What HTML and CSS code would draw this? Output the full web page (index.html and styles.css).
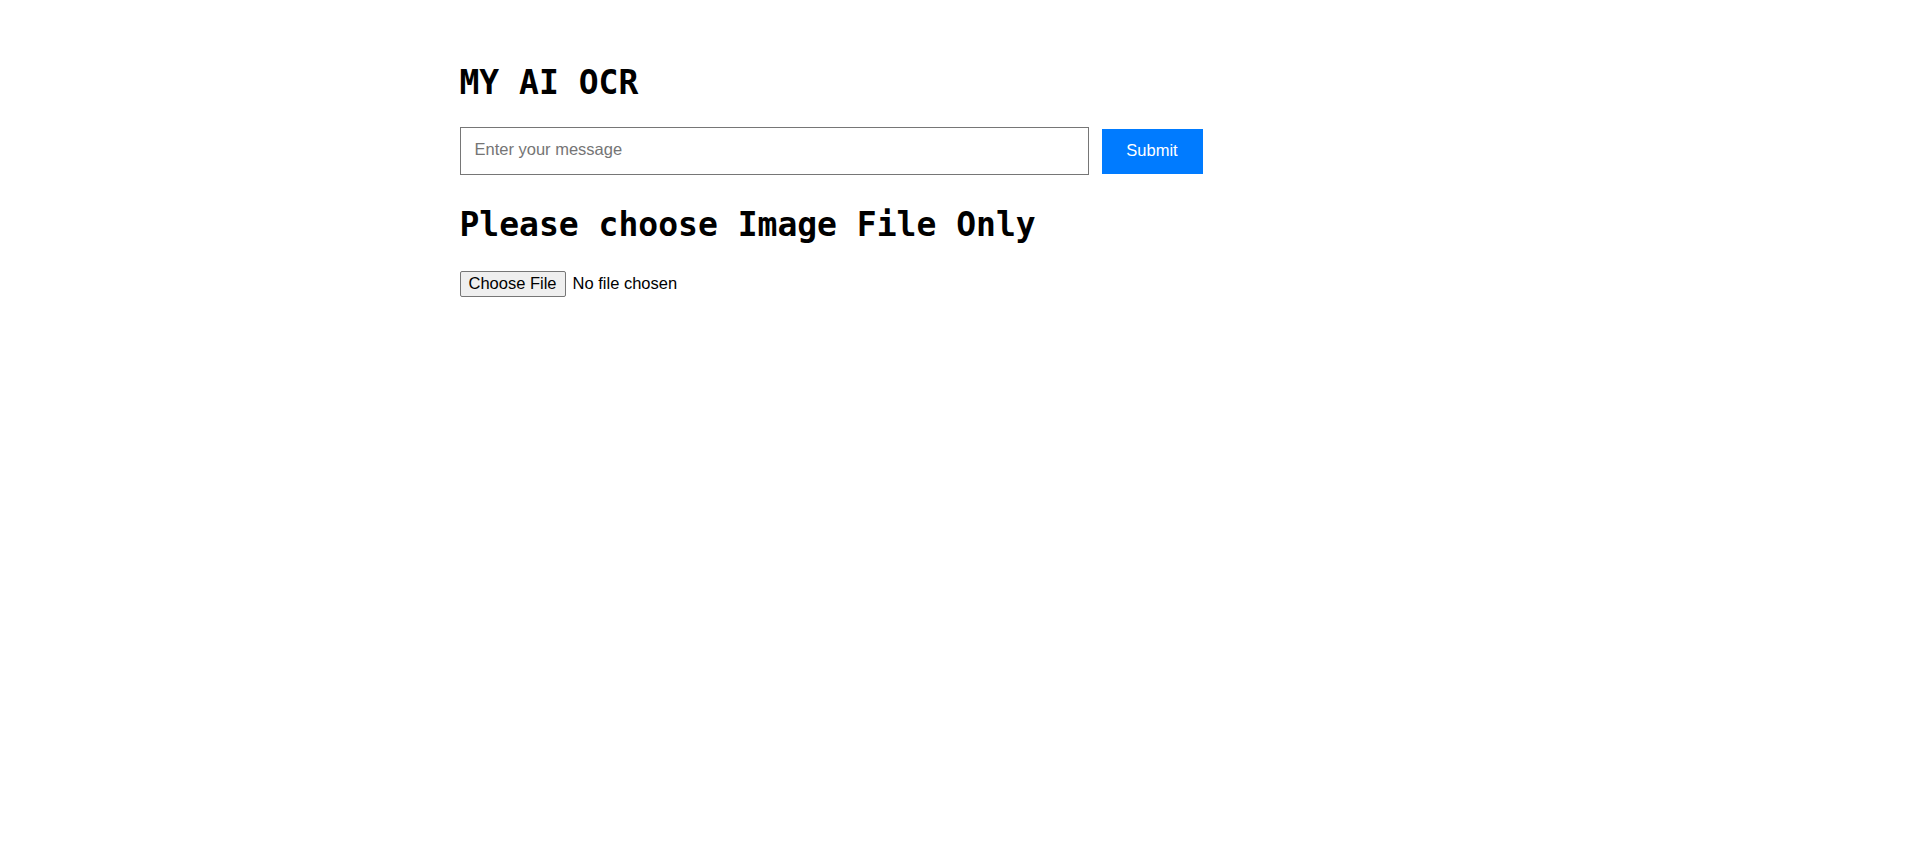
FILE: index.html
```html
<!DOCTYPE html>
<html lang="en">
<head>
<meta charset="utf-8">
<title>MY AI OCR</title>
<link rel="stylesheet" href="styles.css">
</head>
<body>
<main class="container">
  <h1 class="title">MY AI OCR</h1>
  <form class="ask-row" onsubmit="return false;">
    <input class="message" type="text" placeholder="Enter your message">
    <button class="submit" type="submit">Submit</button>
  </form>
  <h2 class="subtitle">Please choose Image File Only</h2>
  <div class="file-row">
    <input class="file" type="file" accept="image/*">
  </div>
</main>
</body>
</html>
```

FILE: styles.css
```css
html, body {
  margin: 0;
  padding: 0;
  background: #ffffff;
}

body {
  font-family: "Liberation Sans", Arial, sans-serif;
  font-size: 16px;
  color: #000;
}

.container {
  width: 1000px;
  margin: 0 auto;
  padding-top: 63px;
  display: flex;
  flex-direction: column;
  align-items: flex-start;
}

.title {
  margin: 0;
  font-family: "DejaVu Sans Mono", monospace;
  font-weight: bold;
  font-size: 33px;
  line-height: 40px;
}

.ask-row {
  margin: 24px 0 0 0;
  display: flex;
  align-items: center;
  gap: 13px;
}

.message {
  box-sizing: border-box;
  width: 629px;
  height: 48px;
  margin: 0;
  padding: 0 14px 3px 14px;
  border: 1px solid #767676;
  border-radius: 0;
  font-family: "Liberation Sans", Arial, sans-serif;
  font-size: 16.5px;
  color: #000;
  outline: none;
}

.message::placeholder {
  color: #757575;
}

.submit {
  box-sizing: border-box;
  width: 101px;
  height: 45px;
  margin: 0;
  padding: 0 0 2px 0;
  border: none;
  border-radius: 0;
  background: #007bff;
  color: #fff;
  font-family: "Liberation Sans", Arial, sans-serif;
  font-size: 16.5px;
  cursor: pointer;
}

.subtitle {
  margin: 30px 0 0 0;
  font-family: "DejaVu Sans Mono", monospace;
  font-weight: bold;
  font-size: 33px;
  line-height: 40px;
}

.file-row {
  margin-top: 25px;
  display: flex;
}

.file {
  font-family: "Liberation Sans", Arial, sans-serif;
  font-size: 16.5px;
  line-height: 26px;
  color: #000;
}

.file::file-selector-button {
  box-sizing: border-box;
  height: 26px;
  margin: 0 7px 0 0;
  padding: 0 8px;
  border: 1px solid #767676;
  border-radius: 2px;
  background: #efefef;
  color: #000;
  font-family: "Liberation Sans", Arial, sans-serif;
  font-size: 16.5px;
}
```
